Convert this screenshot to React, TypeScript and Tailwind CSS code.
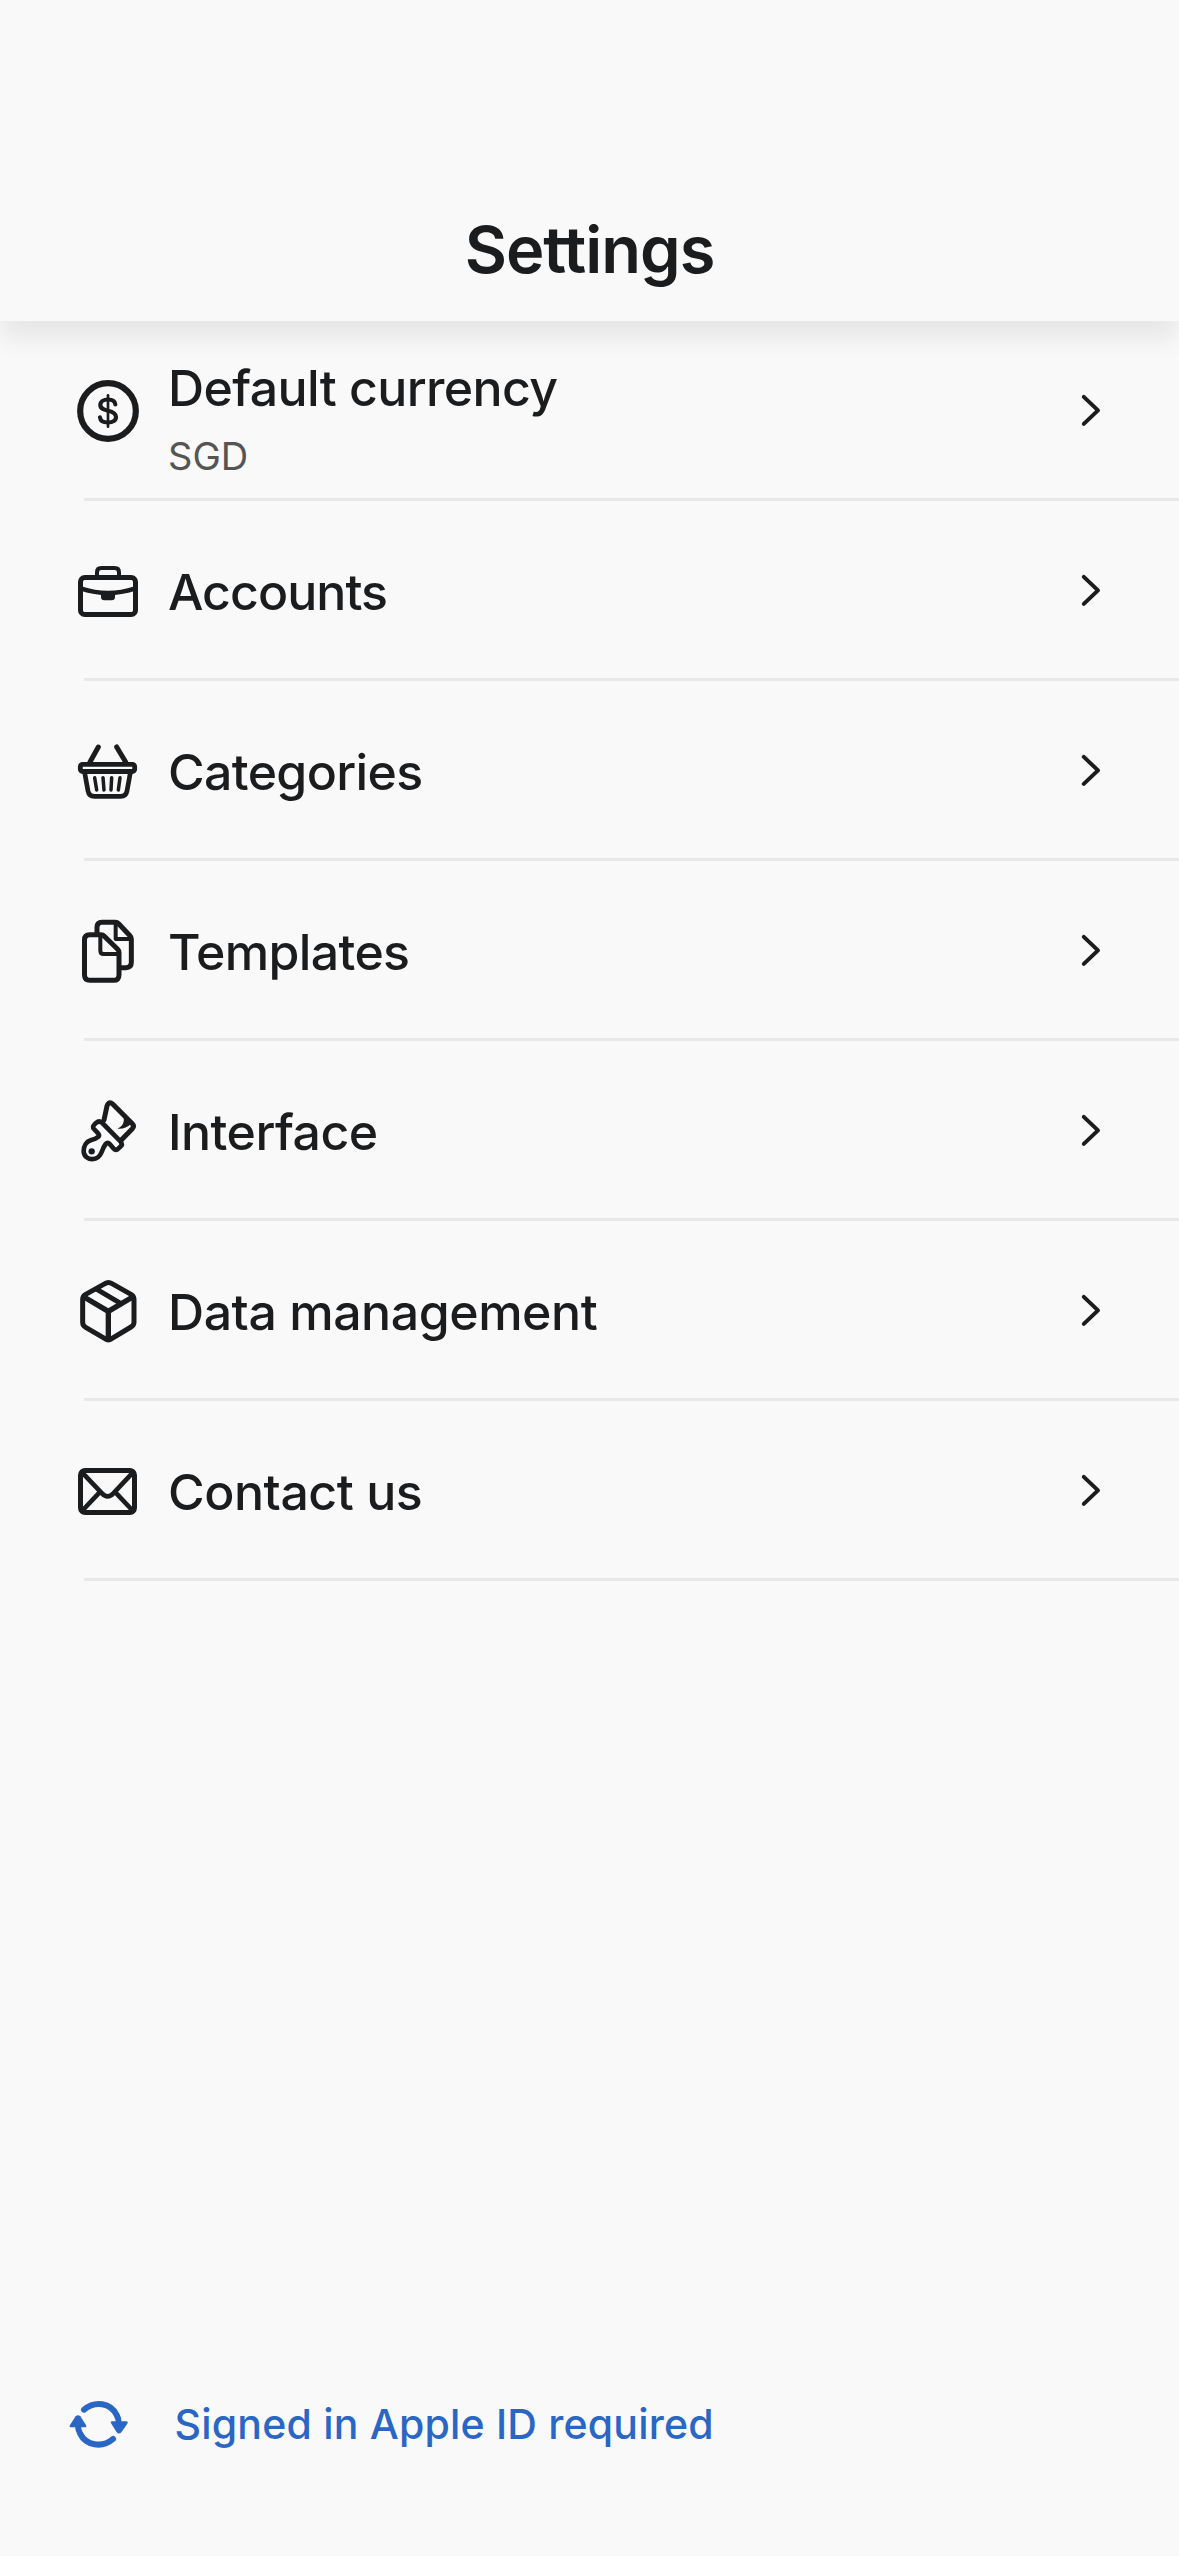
import type { ReactNode } from "react";

function Icon({ children }: { children: ReactNode }) {
  return (
    <svg
      className="h-[100px] w-[100px] shrink-0"
      viewBox="0 0 300 300"
      fill="none"
      stroke="currentColor"
      strokeWidth={15}
      strokeLinecap="round"
      strokeLinejoin="round"
      aria-hidden="true"
    >
      {children}
    </svg>
  );
}

const CurrencyIcon = () => (
  <Icon>
    <circle cx="144" cy="153" r="83.5" strokeWidth={18.5} />
    <path
      strokeWidth={12.5}
      d="M166 133 C165 123 157 118.500 144 118.500 C131 118.500 121 124 121 135 C121 146 130 149 144 152 C158 155 168 159 168 171 C168 182 158 187.500 144 187.500 C130 187.500 121 182 120 172"
    />
    <path strokeWidth={8} d="M144 106V200" />
  </Icon>
);

const BriefcaseIcon = () => (
  <Icon>
    <rect x="61.500" y="112.500" width="165" height="111" rx="13" />
    <path strokeWidth={12} d="M111 109V97Q111 84 124 84H164Q177 84 177 97V109" />
    <path strokeWidth={13} strokeLinecap="butt" d="M64 146Q144 172 224 146" />
    <path fill="currentColor" stroke="none" d="M123 159H165V171Q165 181 155 181H133Q123 181 123 171Z" />
  </Icon>
);

const BasketIcon = () => (
  <Icon>
    <rect x="61" y="133" width="163" height="21.500" rx="7" strokeWidth={14.5} />
    <path d="M115 81L90 126M170 81L197 126" />
    <path strokeWidth={14} d="M74 158L84 213Q87 229 103 229H182Q198 229 201 213L211 158" />
    <path strokeWidth={10.5} d="M104 173L110 210M129 173L132 210M155 173L153 210M180 173L175 210" />
  </Icon>
);

const TemplatesIcon = () => (
  <Icon>
    <path d="M111 100V82Q111 67 126 67H166Q172 67 176 71L210 107Q214 111 214 117V187Q214 203 198 203H184" />
    <path strokeWidth={12} d="M167 70V117H211" />
    <path d="M73.500 120Q73.500 104.500 89 104.500H123Q129 104.500 133 108.500L173 148Q177 152 177 158V224Q177 241 160 241H90Q73.500 241 73.500 225Z" />
    <path strokeWidth={12} d="M121 108V152Q121 162 131 162H174" />
  </Icon>
);

const BrushIcon = () => (
  <Icon>
    <path d="M132 120L141 78Q145 65 155 70Q158 71 161 75L217 131Q224 138 217 146L184 180" />
    <path
      strokeWidth={14}
      d="M182 185L130 132L126 128Q117 121 109 128L103 134Q96 140 102 147L115 161Q120 167 114 171Q108 176 92 181C79 185 71 198 71 214C71 228 83 238 97 237.500C111 237 120 229 125 216Q131 200 137 192Q143 185 149 192L160 205Q168 213 175 206L181 200Q189 193 182 185Z"
    />
    <path fill="currentColor" stroke="none" d="M190 108C195 127 188 139 172 146C188 148 202 142 213 131Z" />
    <circle cx="95" cy="214" r="9.500" fill="currentColor" stroke="none" />
  </Icon>
);

const BoxIcon = () => (
  <Icon>
    <path d="M135 71Q145 64 156 71L213 103Q222 108 222 118V187Q222 196 213 201L155 236Q145 243 135 236L77 202Q68 197 68 187V118Q68 108 77 103Z" />
    <path strokeWidth={16} d="M72 111L145 154L218 111M145 154V236" />
    <path strokeWidth={15} d="M112 89L183 131" />
  </Icon>
);

const MailIcon = () => (
  <Icon>
    <rect x="61.500" y="91.500" width="162" height="126" rx="14" />
    <path strokeWidth={14} d="M66 97L126 160Q143 178 160 160L219 97M66 213L118 158M219 213L167 158" />
  </Icon>
);

const SyncIcon = () => (
  <Icon>
    <g strokeWidth={18}>
      <path d="M102 104C135 76 182 83 200 120Q206 131 206 143" />
      <path d="M189 192C156 220 108 212 90 175Q84 164 84 152" />
    </g>
    <path
      fill="currentColor"
      stroke="none"
      d="M187 139H228Q236 139 232 146L214 172Q207 179 200 172L184 146Q179 139 187 139Z"
    />
    <path
      fill="currentColor"
      stroke="none"
      d="M64 157H104Q111 157 108 150L91 124Q84 117 77 124L60 150Q56 157 64 157Z"
    />
  </Icon>
);

function Chevron() {
  return (
    <svg
      className="mt-[69px] h-10 w-10 shrink-0"
      viewBox="0 0 40 40"
      fill="none"
      stroke="currentColor"
      strokeWidth={4}
      strokeLinecap="round"
      strokeLinejoin="round"
      aria-hidden="true"
    >
      <path d="M13.800 6.900L28 20.400L13.800 33.900" />
    </svg>
  );
}

type Item = { label: string; detail?: string; tracking: string; icon: ReactNode };

const items: Item[] = [
  { label: "Default currency", detail: "SGD", tracking: "tracking-[-0.6px]", icon: <CurrencyIcon /> },
  { label: "Accounts", tracking: "tracking-[-0.95px]", icon: <BriefcaseIcon /> },
  { label: "Categories", tracking: "tracking-[-0.65px]", icon: <BasketIcon /> },
  { label: "Templates", tracking: "tracking-[-0.65px]", icon: <TemplatesIcon /> },
  { label: "Interface", tracking: "tracking-[-0.55px]", icon: <BrushIcon /> },
  { label: "Data management", tracking: "tracking-[-0.45px]", icon: <BoxIcon /> },
  { label: "Contact us", tracking: "tracking-[-0.45px]", icon: <MailIcon /> },
];

function SettingsRow({ label, detail, tracking, icon }: Item) {
  return (
    <li>
      <button type="button" className="flex h-[177px] w-full items-start pr-[69px] pl-[60px] text-left">
        <span className="mt-[39px] shrink-0">{icon}</span>
        <span className={`ml-2 flex flex-1 flex-col ${detail ? "gap-[15px] pt-[37px]" : "pt-[61px]"}`}>
          <span className={`text-[50px] leading-[60px] font-medium ${tracking}`}>{label}</span>
          {detail && <span className="text-[38px] leading-[46px] text-[#555555]">{detail}</span>}
        </span>
        <Chevron />
      </button>
      <div className="ml-[84px] h-[3px] bg-[#e8e8e8]" />
    </li>
  );
}

export default function App() {
  return (
    <div className="flex h-[2556px] w-[1179px] flex-col overflow-hidden bg-[#f9f9f9] font-['Inter',sans-serif] text-[#1b1c1e]">
      <header className="h-[321px] shrink-0 bg-[#f9f9f9] pt-[212px] text-center shadow-[0_18px_24px_rgba(0,0,0,0.075)]">
        <h1 className="text-[65px] leading-[76px] font-semibold tracking-[-1px] [font-variant-ligatures:none]">
          Settings
        </h1>
      </header>
      <ul>
        {items.map((item) => (
          <SettingsRow key={item.label} {...item} />
        ))}
      </ul>
      <footer className="mt-auto mb-[81px] flex h-[100px] items-center pl-[50px] text-[#2a66c4]">
        <SyncIcon />
        <span className="ml-[24.5px] pb-[2px] text-[41px] leading-[50px] font-medium tracking-[0.2px]">
          Signed in Apple ID required
        </span>
      </footer>
    </div>
  );
}
